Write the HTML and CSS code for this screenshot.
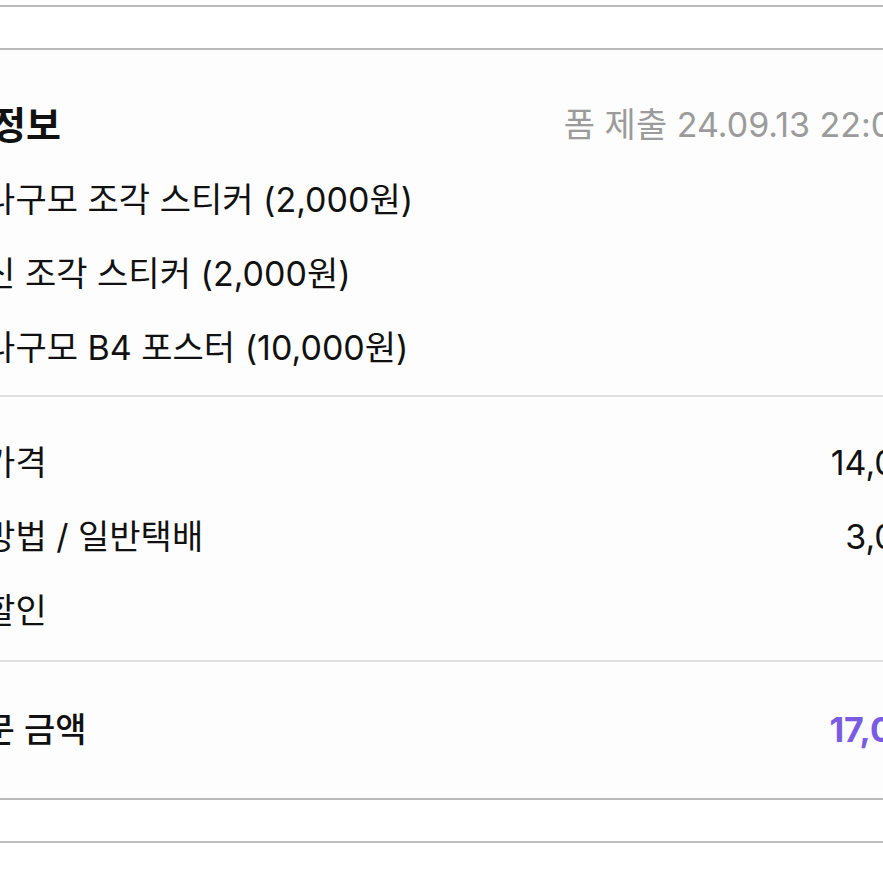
FILE: index.html
```html
<!DOCTYPE html>
<html lang="ko">
<head>
    <meta charset="UTF-8">
    <meta name="viewport" content="width=device-width, initial-scale=1.0">
    <title>주문 정보</title>
    <link rel="stylesheet" href="styles.css">
</head>
<body>
    <div class="strip top-strip"></div>

    <div class="card">
        <div class="inner">
            <div class="card-head">
                <h2 class="title">주문 정보</h2>
                <span class="submitted">폼 제출 24.09.13 22:05</span>
            </div>

            <ul class="items">
                <li>굿즈 나구모 조각 스티커 (2,000원)</li>
                <li>굿즈 신 조각 스티커 (2,000원)</li>
                <li>굿즈 나구모 B4 포스터 (10,000원)</li>
            </ul>
        </div>

        <hr class="divider">

        <div class="inner rows">
            <div class="row">
                <span>상품 가격</span>
                <span>14,000원</span>
            </div>
            <div class="row">
                <span>배송 방법 / 일반택배</span>
                <span>3,000원</span>
            </div>
            <div class="row">
                <span>쿠폰 할인</span>
                <span>0원</span>
            </div>
        </div>

        <hr class="divider">

        <div class="inner total">
            <div class="row">
                <span class="total-label">총 주문 금액</span>
                <span class="total-value">17,000원</span>
            </div>
        </div>
    </div>

    <div class="strip bottom-strip"></div>
</body>
</html>
```

FILE: styles.css
```css
html, body {
    margin: 0;
    padding: 0;
}

body {
    background-color: #fff;
    color: #111;
    font-family: "Inter", "Noto Sans CJK KR", sans-serif;
    overflow: hidden;
    width: 883px;
}

.strip {
    background-color: #fff;
}

.top-strip {
    height: 5px;
    border-bottom: 2px solid #b9b9b9;
    margin-bottom: 41px;
}

.bottom-strip {
    height: 41px;
    border-bottom: 2px solid #bdbdbd;
}

.card {
    background-color: #fdfdfd;
    border-top: 2px solid #b9b9b9;
    border-bottom: 2px solid #b9b9b9;
}

/* the card is wider than the window, both sides are cut off */
.inner {
    margin-left: -88px;
    width: 1058px;
}

.card-head {
    display: flex;
    justify-content: space-between;
    align-items: center;
    padding-top: 35px;
    height: 74px;
}

.title {
    margin: 0;
    font-size: 38px;
    font-weight: 700;
}

.submitted {
    font-size: 34px;
    color: #9b9b9b;
    margin-right: 57px;
}

.items {
    list-style: none;
    margin: 4px 0 10px 0;
    padding: 0;
}

.items li {
    font-size: 34px;
    line-height: 74px;
}

.divider {
    margin: 0;
    border: none;
    border-top: 2px solid #dedede;
}

.rows {
    padding: 29px 0 12px 0;
}

.row {
    display: flex;
    justify-content: space-between;
    font-size: 34px;
    line-height: 74px;
}

.total {
    padding: 31px 0 31px 0;
}

.total-label {
    font-weight: 500;
}

.total-value {
    font-weight: 700;
    color: #7a5ce3;
}
```
